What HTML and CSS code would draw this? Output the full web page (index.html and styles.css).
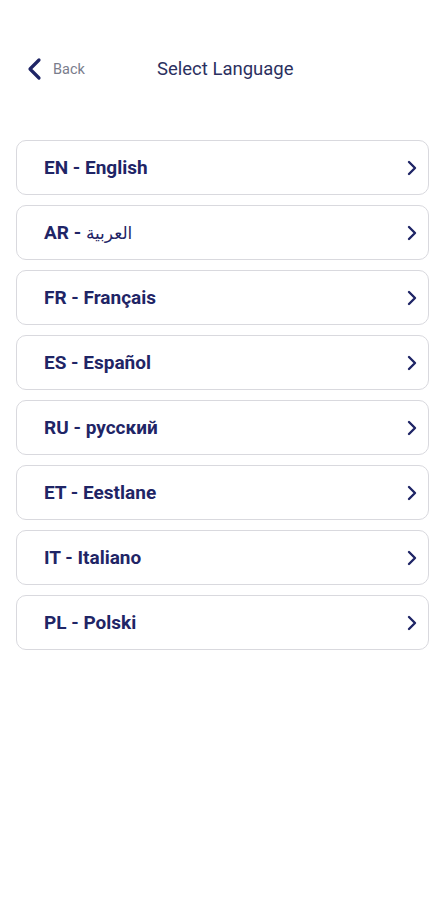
FILE: index.html
```html
<!DOCTYPE html>
<html lang="en">
<head>
  <meta charset="UTF-8" />
  <meta name="viewport" content="width=device-width, initial-scale=1.0"/>
  <title>Select Language</title>
  <link rel="stylesheet" href="styles.css">
</head>
<body>

<header class="top-bar">
  <a class="back" href="#">
    <svg width="16" height="24" viewBox="0 0 16 24"><path d="M13 3 L4 12 L13 21" fill="none" stroke="#1f2566" stroke-width="3.2" stroke-linecap="round" stroke-linejoin="round"/></svg>
    <span>Back</span>
  </a>
  <h1>Select Language</h1>
</header>

<ul class="lang-list">
  <li><span>EN - English</span><svg class="chev" viewBox="0 0 12 18"><path d="M3 3 L9 9 L3 15" /></svg></li>
  <li><span>AR - <bdi>العربية</bdi></span><svg class="chev" viewBox="0 0 12 18"><path d="M3 3 L9 9 L3 15" /></svg></li>
  <li><span>FR - Français</span><svg class="chev" viewBox="0 0 12 18"><path d="M3 3 L9 9 L3 15" /></svg></li>
  <li><span>ES - Español</span><svg class="chev" viewBox="0 0 12 18"><path d="M3 3 L9 9 L3 15" /></svg></li>
  <li><span>RU - русский</span><svg class="chev" viewBox="0 0 12 18"><path d="M3 3 L9 9 L3 15" /></svg></li>
  <li><span>ET - Eestlane</span><svg class="chev" viewBox="0 0 12 18"><path d="M3 3 L9 9 L3 15" /></svg></li>
  <li><span>IT - Italiano</span><svg class="chev" viewBox="0 0 12 18"><path d="M3 3 L9 9 L3 15" /></svg></li>
  <li><span>PL - Polski</span><svg class="chev" viewBox="0 0 12 18"><path d="M3 3 L9 9 L3 15" /></svg></li>
</ul>

</body>
</html>
```

FILE: styles.css
```css
body {
  font-family: Roboto, 'Noto Sans', sans-serif;
  margin: 0;
  background: #fff;
  color: #1f2566;
}
.top-bar {
  display: flex;
  align-items: center;
  height: 40px;
  margin-top: 49px;
  padding: 0 26px;
}
.back {
  display: flex;
  align-items: center;
  gap: 11px;
  text-decoration: none;
  color: #7a7d8c;
  font-size: 14.5px;
  width: 131px;
}
.back span {
  margin-top: 1px;
}
.top-bar h1 {
  margin: 0;
  font-size: 18.5px;
  font-weight: 400;
  color: #2b3060;
}
.lang-list {
  list-style: none;
  margin: 51px 16px 0;
  padding: 0;
  display: flex;
  flex-direction: column;
  gap: 10px;
}
.lang-list li {
  display: flex;
  justify-content: space-between;
  align-items: center;
  height: 53px;
  padding: 0 10px 0 27px;
  border: 1px solid #d9d9de;
  border-radius: 10px;
  font-size: 19px;
  font-weight: 700;
  color: #1f2566;
}
.lang-list bdi {
  font-weight: 400;
  font-family: 'DejaVu Sans', sans-serif;
  font-size: 17px;
}
.chev {
  width: 12px;
  height: 18px;
}
.chev path {
  fill: none;
  stroke: #1f2566;
  stroke-width: 2.4;
  stroke-linecap: round;
  stroke-linejoin: round;
}
```
